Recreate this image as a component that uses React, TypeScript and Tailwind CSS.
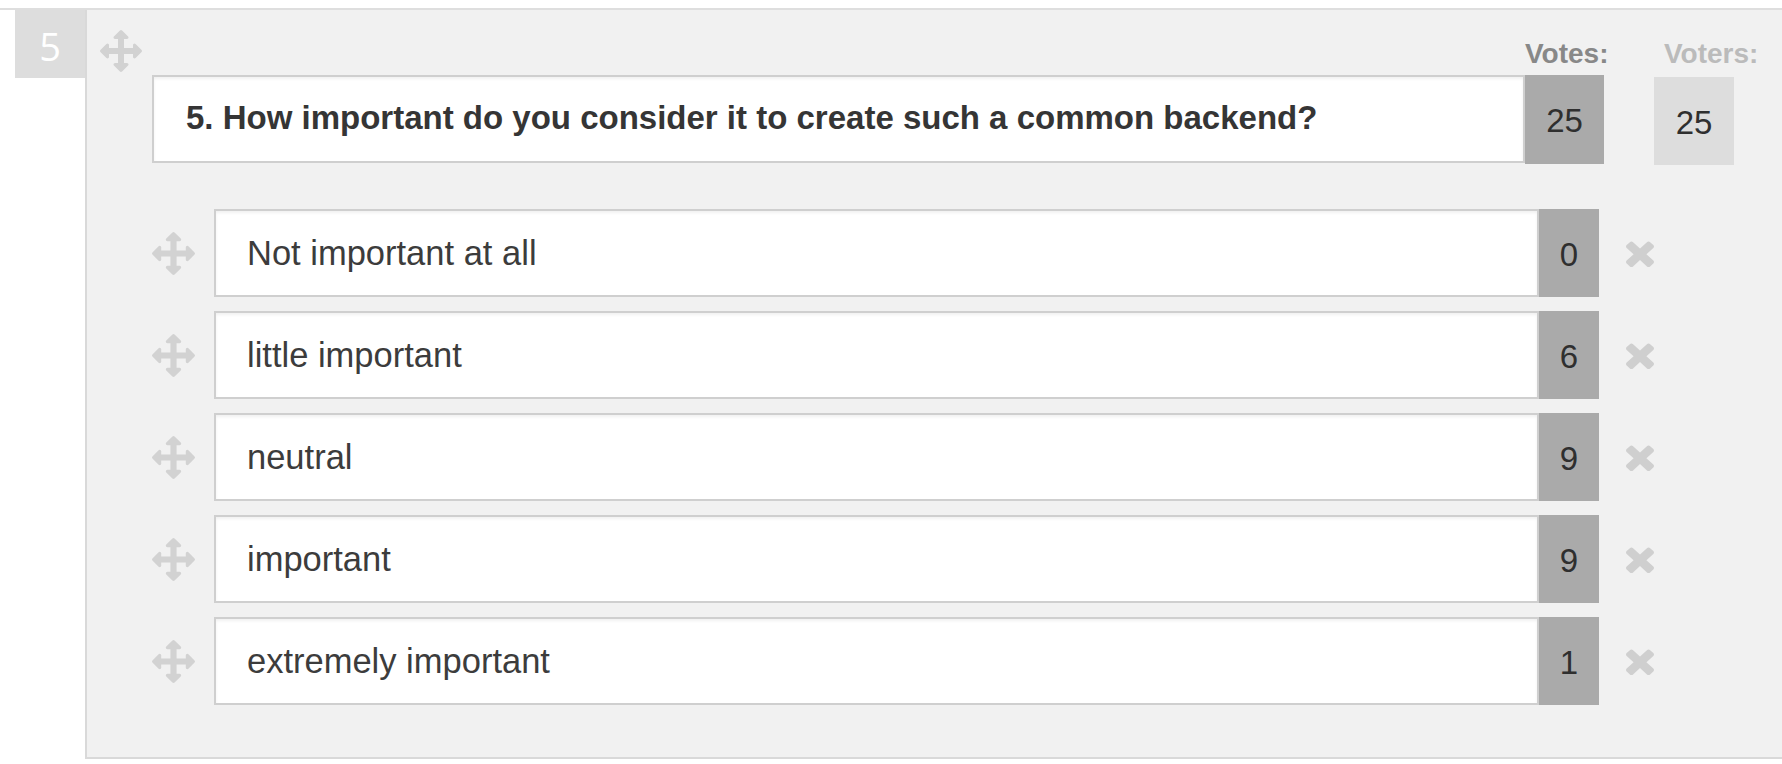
import React from 'react';

const options = [
  { label: 'Not important at all', votes: 0 },
  { label: 'little important', votes: 6 },
  { label: 'neutral', votes: 9 },
  { label: 'important', votes: 9 },
  { label: 'extremely important', votes: 1 },
];

// font-awesome 4 "arrows" glyph
const MoveIcon = ({ className }: { className?: string }) => (
  <svg viewBox="0 0 1792 1792" className={className} fill="currentColor">
    <path d="M1792 896q0 26-19 45l-256 256q-19 19-45 19t-45-19-19-45v-128h-384v384h128q26 0 45 19t19 45-19 45l-256 256q-19 19-45 19t-45-19l-256-256q-19-19-19-45t19-45 45-19h128v-384h-384v128q0 26-19 45t-45 19-45-19l-256-256q-19-19-19-45t19-45l256-256q19-19 45-19t45 19 19 45v128h384v-384h-128q-26 0-45-19t-19-45 19-45l256-256q19-19 45-19t45 19l256 256q19 19 19 45t-19 45-45 19h-128v384h384v-128q0-26 19-45t45-19 45 19l256 256q19 19 19 45z" />
  </svg>
);

// font-awesome 4 "times" glyph
const RemoveIcon = ({ className }: { className?: string }) => (
  <svg viewBox="110 246 1188 1308" preserveAspectRatio="none" className={className} fill="currentColor">
    <path d="M1298 1322q0 40-28 68l-136 136q-28 28-68 28t-68-28l-294-294-294 294q-28 28-68 28t-68-28l-136-136q-28-28-28-68t28-68l294-294-294-294q-28-28-28-68t28-68l136-136q28-28 68-28t68 28l294 294 294-294q28-28 68-28t68 28l136 136q28 28 28 68t-28 68l-294 294 294 294q28 28 28 68z" />
  </svg>
);

const OptionRow = ({ label, votes }: { label: string; votes: number }) => (
  <div className="flex items-center h-[88px] ml-[65px]">
    <MoveIcon className="w-[43px] h-[43px] text-[#d2d2d2] shrink-0" />
    <div className="ml-[19px] w-[1325px] h-full flex items-center bg-white border-2 border-[#cfcfcf] shadow-[inset_0_2px_3px_rgba(0,0,0,0.06)] pl-[31px] pt-[2px] text-[34.5px] text-[#3c3c3c]">
      {label}
    </div>
    <div className="w-[60px] h-full bg-[#aaaaaa] flex items-center justify-center pt-[3px] text-[33px] text-[#2f2f2f]">
      {votes}
    </div>
    <button className="ml-[27px] text-[#cfcfcf]">
      <RemoveIcon className="w-[28px] h-[28px]" />
    </button>
  </div>
);

export default function App() {
  return (
    <div className="w-full h-[764px] bg-white overflow-hidden pt-[8px] font-['Liberation_Sans',Arial,sans-serif]">
      <div className="flex border-t-2 border-[#dedede]">
        <div className="ml-[15px] w-[70px] h-[68px] bg-[#dddddd] flex items-center justify-center pt-[4px] text-white text-[38px] font-['Open_Sans',sans-serif] shrink-0">
          5
        </div>
        <div className="flex-1 h-[749px] bg-[#f1f1f1] border-l-2 border-b-2 border-[#d9d9d9] flex flex-col">
          <div className="flex items-start">
            <div className="flex flex-col">
              <MoveIcon className="mt-[20px] ml-[13px] w-[42px] h-[42px] text-[#d2d2d2]" />
              <div className="mt-[3px] ml-[65px] w-[1373px] h-[88px] flex items-center bg-white border-2 border-[#cfcfcf] shadow-[inset_0_2px_3px_rgba(0,0,0,0.06)] pl-[32px] pb-[2px] text-[33px] font-bold text-[#353535] whitespace-nowrap">
                5. How important do you consider it to create such a common backend?
              </div>
            </div>
            <div className="flex flex-col w-[79px]">
              <div className="mt-[30px] h-[28px] leading-[28px] text-[28px] font-bold text-[#888888] whitespace-nowrap">
                Votes:
              </div>
              <div className="mt-[7px] h-[89px] bg-[#aaaaaa] flex items-center justify-center pt-[3px] text-[33px] text-[#2f2f2f]">
                25
              </div>
            </div>
            <div className="flex flex-col w-[80px] ml-[50px]">
              <div className="mt-[30px] pl-[10px] h-[28px] leading-[28px] text-[28px] font-bold text-[#bbbbbb] whitespace-nowrap">
                Voters:
              </div>
              <div className="mt-[9px] h-[88px] bg-[#dddddd] flex items-center justify-center pt-[3px] text-[33px] text-[#2f2f2f]">
                25
              </div>
            </div>
          </div>
          <div className="mt-[44px] flex flex-col gap-[14px]">
            {options.map((o) => (
              <OptionRow key={o.label} label={o.label} votes={o.votes} />
            ))}
          </div>
        </div>
      </div>
    </div>
  );
}
